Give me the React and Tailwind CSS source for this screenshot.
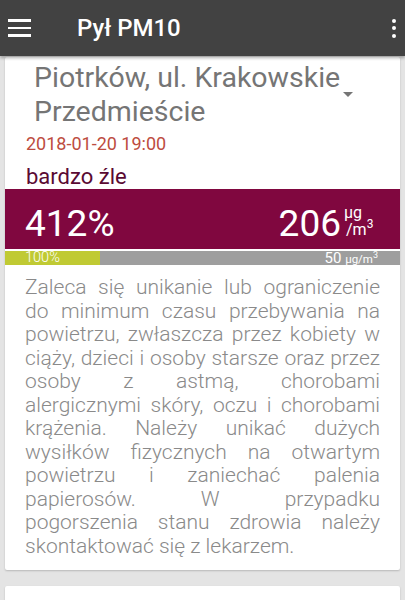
const adviceLines = [
  "Zaleca się unikanie lub ograniczenie",
  "do minimum czasu przebywania na",
  "powietrzu, zwłaszcza przez kobiety w",
  "ciąży, dzieci i osoby starsze oraz przez",
  "osoby z astmą, chorobami",
  "alergicznymi skóry, oczu i chorobami",
  "krążenia. Należy unikać dużych",
  "wysiłków fizycznych na otwartym",
  "powietrzu i zaniechać palenia",
  "papierosów. W przypadku",
  "pogorszenia stanu zdrowia należy",
  "skontaktować się z lekarzem.",
];

function Toolbar() {
  return (
    <div className="relative z-10 flex h-[56px] items-center bg-[#424242] shadow-[0_2px_3px_rgba(0,0,0,0.3)]">
      <div className="ml-[8px] flex w-[23px] flex-col gap-[5px]">
        <div className="h-[2.5px] bg-white" />
        <div className="h-[2.5px] bg-white" />
        <div className="h-[2.5px] bg-white" />
      </div>
      <div className="ml-[46px] text-[24px] font-medium text-white">Pył PM10</div>
      <div className="ml-auto mr-[6px] flex flex-col gap-[3.5px] px-[3px]">
        <div className="h-[4px] w-[4px] rounded-full bg-white" />
        <div className="h-[4px] w-[4px] rounded-full bg-white" />
        <div className="h-[4px] w-[4px] rounded-full bg-white" />
      </div>
    </div>
  );
}

export default function App() {
  return (
    <div className="h-[600px] overflow-hidden bg-[#e4e4e4] font-['Roboto',sans-serif]">
      <Toolbar />
      <div className="mx-[5px] mt-[1px] rounded-[2px] bg-white pb-[12px] shadow-[0_1px_2px_rgba(0,0,0,0.2)]">
        <div className="relative pl-[29px] pr-[40px] pt-[4px]">
          <div className="text-[28.5px] leading-[34px] text-[#757575]">
            Piotrków, ul. Krakowskie Przedmieście
          </div>
          <div className="absolute left-[338px] top-[35px] h-0 w-0 border-l-[5px] border-r-[5px] border-t-[5px] border-l-transparent border-r-transparent border-t-[#757575]" />
        </div>
        <div className="mt-[5px] pl-[21px] text-[18px] leading-[20px] text-[#bd4c40]">
          2018-01-20 19:00
        </div>
        <div className="mt-[10px] pl-[21px] text-[22px] leading-[25px] text-[#5a0a33]">
          bardzo źle
        </div>
        <div className="flex h-[60px] items-center bg-[#80073f] pl-[20px] pr-[20px] text-white">
          <div className="mt-[8px] text-[37px] leading-none">412%</div>
          <div className="ml-auto mt-[8px] text-[37px] leading-none">206</div>
          <div className="ml-[2px] mt-[4px] flex w-[37px] flex-col text-[16px] leading-[17px]">
            <span className="pl-[1px]">µg</span>
            <span className="pl-[3px]">
              /m<span className="relative top-[-7px] text-[12px] leading-none">3</span>
            </span>
          </div>
        </div>
        <div className="mt-[2px] flex h-[14px] bg-[#9e9e9e] text-white">
          <div className="w-[95px] bg-[#c0ca33] pl-[20px] text-[14.5px] font-light leading-[14px]">
            100%
          </div>
          <div className="ml-auto pr-[22px] text-[15px] leading-[14px]">
            50 <span className="text-[11.5px]">µg/m</span>
            <span className="relative top-[-5px] text-[9px]">3</span>
          </div>
        </div>
        <div className="mt-[11px] px-[20px] text-[21px] font-light leading-[23.5px] text-[#8a8a8a]">
          {adviceLines.map((line, i) => (
            <div
              key={i}
              className={
                i < adviceLines.length - 1
                  ? "text-justify [text-align-last:justify]"
                  : "text-left"
              }
            >
              {line}
            </div>
          ))}
        </div>
      </div>
      <div className="mx-[5px] mt-[16px] h-[40px] rounded-[2px] bg-white shadow-[0_1px_2px_rgba(0,0,0,0.2)]" />
    </div>
  );
}
